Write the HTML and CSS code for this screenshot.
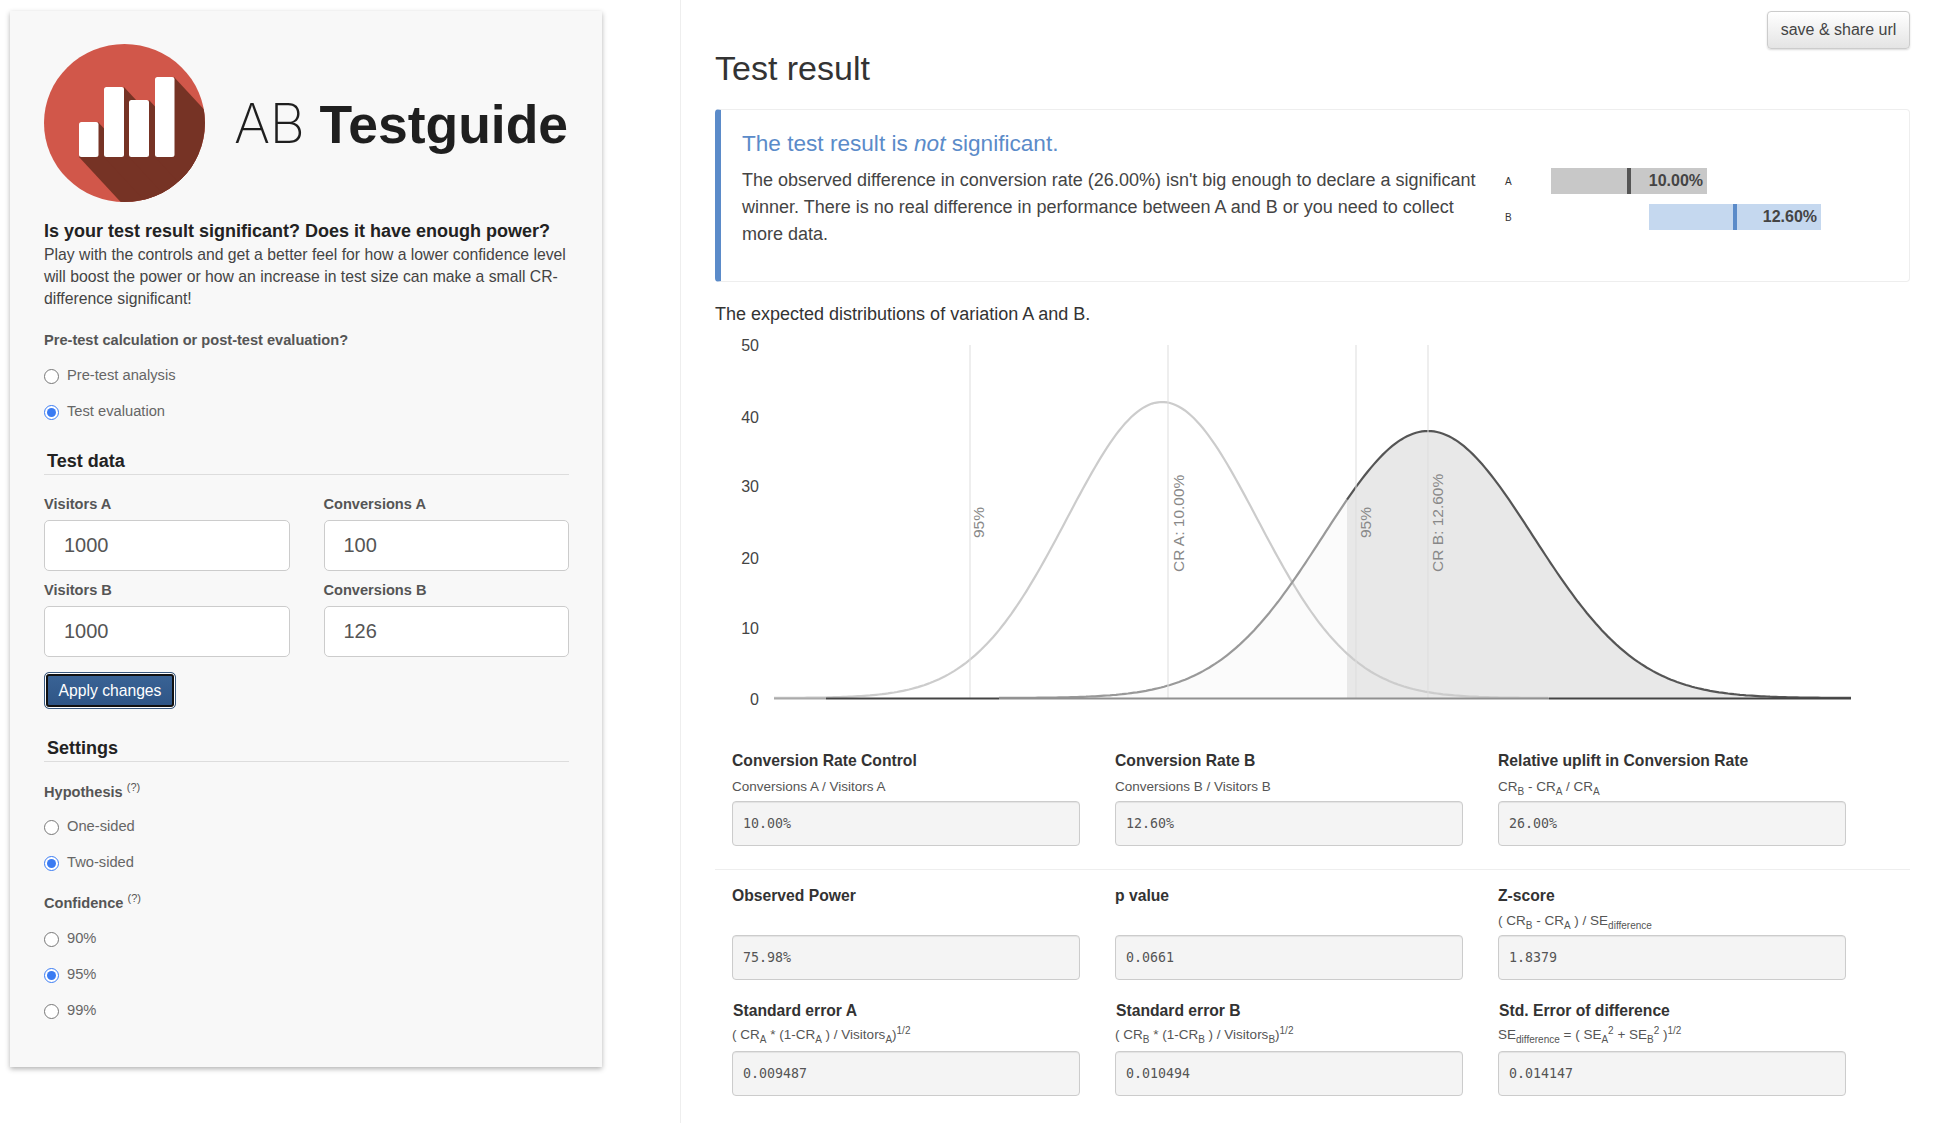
FILE: index.html
```html
<!DOCTYPE html>
<html lang="en">
<head>
    <meta charset="UTF-8">
    <meta name="viewport" content="width=device-width, initial-scale=1.0">
    <title>AB Testguide</title>
    <link rel="stylesheet" href="styles.css">
</head>
<body>
    <div class="page">
        <!-- Controls -->
        <div class="sidebar">
            <div class="card">
                <div class="logo">
                    <svg class="logo-mark" width="161" height="158" viewBox="0 0 161 158">
                        <defs>
                            <clipPath id="logo-clip"><ellipse cx="80.5" cy="79" rx="80.5" ry="79"/></clipPath>
                        </defs>
                        <ellipse cx="80.5" cy="79" rx="80.5" ry="79" fill="#d1574a"/>
                        <g clip-path="url(#logo-clip)" fill="#763325">
                            <polygon points="54,78 154,186 135,221 35,113"/>
                            <polygon points="80,43 180,151 160,221 60,113"/>
                            <polygon points="105,56 205,164 185,221 85,113"/>
                            <polygon points="130,33 230,141 211,221 111,113"/>
                        </g>
                        <g fill="#ffffff">
                            <rect x="35" y="78" width="19.5" height="35" rx="2.5"/>
                            <rect x="60" y="43" width="20" height="70" rx="2.5"/>
                            <rect x="85" y="56" width="20" height="57" rx="2.5"/>
                            <rect x="111" y="33" width="19.5" height="80" rx="2.5"/>
                        </g>
                    </svg>
                    <div class="logo-text"><span class="logo-thin">AB</span> <b>Testguide</b></div>
                </div>

                <h3 class="intro-title">Is your test result significant? Does it have enough power?</h3>
                <p class="intro-text">Play with the controls and get a better feel for how a lower confidence level will boost the power or how an increase in test size can make a small CR-difference significant!</p>

                <div class="field-label first-label">Pre-test calculation or post-test evaluation?</div>
                <div class="radio-group">
                    <label class="radio-row"><input type="radio" name="mode"> Pre-test analysis</label>
                    <label class="radio-row"><input type="radio" name="mode" checked> Test evaluation</label>
                </div>

                <h4 class="group-title">Test data</h4>
                <div class="data-grid">
                    <label class="data-field"><span class="field-label">Visitors A</span><input class="data-input" type="text" value="1000"></label>
                    <label class="data-field"><span class="field-label">Conversions A</span><input class="data-input" type="text" value="100"></label>
                    <label class="data-field"><span class="field-label">Visitors B</span><input class="data-input" type="text" value="1000"></label>
                    <label class="data-field"><span class="field-label">Conversions B</span><input class="data-input" type="text" value="126"></label>
                </div>
                <button class="apply-button">Apply changes</button>

                <h4 class="group-title settings-title">Settings</h4>
                <div class="field-label hypothesis-label">Hypothesis <sup>(?)</sup></div>
                <div class="radio-group">
                    <label class="radio-row"><input type="radio" name="sides"> One-sided</label>
                    <label class="radio-row"><input type="radio" name="sides" checked> Two-sided</label>
                </div>
                <div class="field-label confidence-label">Confidence <sup>(?)</sup></div>
                <div class="radio-group">
                    <label class="radio-row"><input type="radio" name="confidence"> 90%</label>
                    <label class="radio-row"><input type="radio" name="confidence" checked> 95%</label>
                    <label class="radio-row"><input type="radio" name="confidence"> 99%</label>
                </div>
            </div>
        </div>

        <!-- Results -->
        <div class="main">
            <div class="top-actions"><button class="share-button">save &amp; share url</button></div>
            <h1 class="page-title">Test result</h1>

            <div class="result-box">
                <h2 class="result-title">The test result is <em>not</em> significant.</h2>
                <div class="result-body">
                    <p class="result-text">The observed difference in conversion rate (26.00%) isn't big enough to declare a significant winner. There is no real difference in performance between A and B or you need to collect more data.</p>
                    <div class="mini-bars">
                        <div class="mini-row">
                            <span class="mini-label">A</span>
                            <div class="mini-bar bar-a"><i class="mini-tick"></i><span>10.00%</span></div>
                        </div>
                        <div class="mini-row">
                            <span class="mini-label">B</span>
                            <div class="mini-bar bar-b"><i class="mini-tick"></i><span>12.60%</span></div>
                        </div>
                    </div>
                </div>
            </div>

            <p class="chart-caption">The expected distributions of variation A and B.</p>

            <svg class="chart" width="1196" height="390" viewBox="714 330 1196 390">
                <path id="fill-b" fill="#fbfbfb"/>
                <path id="fill-sig" fill="#e8e8e8"/>
                <path id="line-a" class="curve" stroke="#cccccc"/>
                <path id="line-b-low" class="curve" stroke="#999999"/>
                <path id="line-b-high" class="curve" stroke="#555555"/>

                <line class="marker" x1="970" y1="345" x2="970" y2="698"/>
                <line class="marker" x1="1168" y1="345" x2="1168" y2="698"/>
                <line class="marker" x1="1356" y1="345" x2="1356" y2="698"/>
                <line class="marker" x1="1428" y1="345" x2="1428" y2="698"/>

                <line class="baseline" stroke="#aaaaaa" x1="774" y1="698.5" x2="826" y2="698.5"/>
                <line class="baseline" stroke="#444444" x1="826" y1="698.5" x2="999" y2="698.5"/>
                <line class="baseline" stroke="#909090" x1="999" y1="698.5" x2="1549" y2="698.5"/>
                <line class="baseline" stroke="#444444" x1="1549" y1="698.5" x2="1851" y2="698.5"/>

                <text class="axis-label" x="759" y="351">50</text>
                <text class="axis-label" x="759" y="423">40</text>
                <text class="axis-label" x="759" y="492">30</text>
                <text class="axis-label" x="759" y="564">20</text>
                <text class="axis-label" x="759" y="634">10</text>
                <text class="axis-label" x="759" y="705">0</text>

                <text class="marker-label" transform="translate(984 538) rotate(-90)">95%</text>
                <text class="marker-label" transform="translate(1184 572) rotate(-90)">CR A: 10.00%</text>
                <text class="marker-label" transform="translate(1371 538) rotate(-90)">95%</text>
                <text class="marker-label" transform="translate(1443 572) rotate(-90)">CR B: 12.60%</text>
            </svg>

            <div class="stat-row">
                <div class="stat">
                    <div class="stat-title">Conversion Rate Control</div>
                    <div class="stat-sub">Conversions A / Visitors A</div>
                    <output class="stat-value">10.00%</output>
                </div>
                <div class="stat">
                    <div class="stat-title">Conversion Rate B</div>
                    <div class="stat-sub">Conversions B / Visitors B</div>
                    <output class="stat-value">12.60%</output>
                </div>
                <div class="stat">
                    <div class="stat-title">Relative uplift in Conversion Rate</div>
                    <div class="stat-sub">CR<sub>B</sub> - CR<sub>A</sub> / CR<sub>A</sub></div>
                    <output class="stat-value">26.00%</output>
                </div>
            </div>

            <hr class="stat-divider">

            <div class="stat-row row-power">
                <div class="stat">
                    <div class="stat-title">Observed Power</div>
                    <div class="stat-sub"></div>
                    <output class="stat-value">75.98%</output>
                </div>
                <div class="stat">
                    <div class="stat-title">p value</div>
                    <div class="stat-sub"></div>
                    <output class="stat-value">0.0661</output>
                </div>
                <div class="stat">
                    <div class="stat-title">Z-score</div>
                    <div class="stat-sub">( CR<sub>B</sub> - CR<sub>A</sub> ) / SE<sub>difference</sub></div>
                    <output class="stat-value">1.8379</output>
                </div>
            </div>

            <div class="stat-row row-error">
                <div class="stat">
                    <div class="stat-title">Standard error A</div>
                    <div class="stat-sub">( CR<sub>A</sub> * (1-CR<sub>A</sub> ) / Visitors<sub>A</sub>)<sup>1/2</sup></div>
                    <output class="stat-value">0.009487</output>
                </div>
                <div class="stat">
                    <div class="stat-title">Standard error B</div>
                    <div class="stat-sub">( CR<sub>B</sub> * (1-CR<sub>B</sub> ) / Visitors<sub>B</sub>)<sup>1/2</sup></div>
                    <output class="stat-value">0.010494</output>
                </div>
                <div class="stat">
                    <div class="stat-title">Std. Error of difference</div>
                    <div class="stat-sub">SE<sub>difference</sub> = ( SE<sub>A</sub><sup>2</sup> + SE<sub>B</sub><sup>2</sup> )<sup>1/2</sup></div>
                    <output class="stat-value">0.014147</output>
                </div>
            </div>
        </div>
    </div>

    <script src="script.js"></script>
</body>
</html>
```

FILE: styles.css
```css
* {
    margin: 0;
    padding: 0;
    box-sizing: border-box;
}

body {
    background-color: #ffffff;
    color: #333333;
    font-family: "Liberation Sans", Arial, sans-serif;
    overflow: hidden;
}

.page {
    display: flex;
    min-height: 100vh;
}

/* Sidebar */
.sidebar {
    width: 681px;
    flex-shrink: 0;
    padding: 11px 0 0 10px;
    border-right: 1px solid #eeeeee;
}

.card {
    width: 592px;
    height: 1056px;
    padding: 33px 33px 0 34px;
    background-color: #f8f8f8;
    box-shadow: 0 2px 5px rgba(0,0,0,0.3);
}

.logo {
    display: flex;
    align-items: center;
    gap: 29px;
}

.logo-mark {
    flex-shrink: 0;
}

.logo-text {
    font-size: 53.5px;
    color: #1f1f1f;
    white-space: nowrap;
}

.logo-thin {
    font-family: Inter, "Liberation Sans", sans-serif;
    font-size: 55px;
    font-weight: 200;
    letter-spacing: -0.5px;
}

.intro-title {
    margin-top: 17px;
    font-size: 18px;
    line-height: 25px;
    color: #222222;
}

.intro-text {
    font-size: 15.75px;
    line-height: 22px;
    color: #444444;
}

.field-label {
    display: block;
    font-size: 14.6px;
    font-weight: bold;
    line-height: 20px;
    color: #555555;
}

.field-label sup {
    font-size: 11px;
    font-weight: normal;
    line-height: 0;
}

.first-label {
    margin-top: 20px;
}

.radio-group {
    margin-top: 7px;
}

.radio-row {
    display: flex;
    align-items: center;
    gap: 8px;
    height: 36px;
    font-size: 14.7px;
    color: #666666;
}

.radio-row input {
    width: 15px;
    height: 15px;
    margin: 2px 0 0;
    accent-color: #3a7bf2;
}

.group-title {
    margin-top: 19px;
    padding-left: 3px;
    height: 27px;
    font-size: 18px;
    line-height: 26px;
    color: #222222;
    border-bottom: 1px solid #dddddd;
}

.settings-title {
    margin-top: 26px;
}

.data-grid {
    display: grid;
    grid-template-columns: 1fr 1fr;
    column-gap: 34px;
    row-gap: 9px;
    margin-top: 19px;
}

.data-input {
    display: block;
    width: 100%;
    height: 51px;
    margin-top: 6px;
    padding: 0 19px;
    border: 1px solid #cccccc;
    border-radius: 5px;
    background-color: #ffffff;
    font-family: inherit;
    font-size: 20px;
    color: #555555;
}

.apply-button {
    display: block;
    width: 132px;
    height: 37px;
    margin-top: 15px;
    border: 1px solid #3a5a80;
    border-radius: 5px;
    box-shadow: inset 0 0 0 1px #ffffff, inset 0 0 0 3px #111111;
    background: linear-gradient(#3a6496, #2e5485);
    font-family: inherit;
    font-size: 15.7px;
    color: #ffffff;
}

.hypothesis-label {
    margin-top: 20px;
}

.hypothesis-label + .radio-group {
    margin-top: 6px;
}

.confidence-label {
    margin-top: 13px;
}

/* Main column */
.main {
    flex: 1;
    padding: 11px 28px 0 34px;
}

.top-actions {
    display: flex;
    justify-content: flex-end;
}

.share-button {
    width: 143px;
    height: 38px;
    border: 1px solid #cccccc;
    border-radius: 4px;
    background: linear-gradient(#ffffff, #e4e4e4);
    box-shadow: 0 1px 2px rgba(0,0,0,0.15);
    font-family: inherit;
    font-size: 16px;
    color: #444444;
}

.page-title {
    margin-top: -1px;
    font-size: 34px;
    font-weight: normal;
    line-height: 40px;
    color: #333333;
}

.result-box {
    height: 173px;
    margin-top: 21px;
    padding: 19px 20px 0 21px;
    border: 1px solid #eeeeee;
    border-left: 6px solid #5b8bc9;
    border-radius: 4px;
}

.result-title {
    font-size: 22.6px;
    font-weight: normal;
    line-height: 30px;
    color: #5b8bc9;
}

.result-body {
    display: flex;
    margin-top: 8px;
}

.result-text {
    width: 745px;
    flex-shrink: 0;
    font-size: 18px;
    line-height: 27px;
    color: #444444;
}

.mini-bars {
    display: flex;
    flex-direction: column;
    gap: 10px;
    margin: 1px 0 0 18px;
}

.mini-row {
    display: flex;
    align-items: center;
}

.mini-label {
    width: 46px;
    font-size: 10px;
    color: #333333;
}

.mini-bar {
    position: relative;
    display: flex;
    justify-content: flex-end;
    align-items: center;
    height: 26px;
    padding-right: 4px;
    font-size: 16px;
    font-weight: bold;
    color: #444444;
}

.bar-a {
    width: 156px;
    background-color: #c8c8c8;
}

.bar-b {
    width: 172px;
    margin-left: 98px;
    background-color: #c5d8ef;
}

.mini-tick {
    position: absolute;
    top: 0;
    bottom: 0;
    width: 4px;
}

.bar-a .mini-tick {
    left: 76px;
    background-color: #555555;
}

.bar-b .mini-tick {
    left: 84px;
    background-color: #5b8bc9;
}

.chart-caption {
    margin-top: 19px;
    font-size: 18px;
    line-height: 26px;
    color: #333333;
}

/* Chart */
.chart {
    display: block;
    margin: 3px 0 0 -1px;
}

.curve {
    fill: none;
    stroke-width: 2.2;
}

.marker {
    stroke: #dddddd;
    stroke-width: 1;
}

.baseline {
    stroke-width: 2;
}

.axis-label {
    font-size: 16px;
    fill: #444444;
    text-anchor: end;
}

.marker-label {
    font-size: 15.5px;
    fill: #888888;
}

/* Stats */
.stat-row {
    display: grid;
    grid-template-columns: repeat(3, 348px);
    column-gap: 35px;
    padding-left: 17px;
    margin-top: 30px;
}

.stat-title {
    font-size: 15.7px;
    font-weight: bold;
    line-height: 22px;
    color: #333333;
}

.stat-sub {
    height: 20px;
    margin-top: 5px;
    font-size: 13.5px;
    line-height: 20px;
    color: #555555;
}

.stat-sub sub, .stat-sub sup {
    font-size: 10px;
    line-height: 0;
}

.stat-value {
    display: flex;
    align-items: center;
    height: 45px;
    margin-top: 4px;
    padding-left: 10px;
    border: 1px solid #cccccc;
    border-radius: 4px;
    background-color: #f4f4f4;
    box-shadow: inset 0 1px 1px rgba(0,0,0,0.07);
    font-family: "DejaVu Sans Mono", monospace;
    font-size: 13.3px;
    color: #555555;
}

.stat-divider {
    height: 0;
    margin-top: 23px;
    border: none;
    border-top: 1px solid #eeeeee;
}

.row-power {
    margin-top: 15px;
}

.row-power .stat-sub {
    margin-top: 4px;
}

.row-error {
    margin-top: 20px;
}

.row-error .stat-title {
    margin-left: 1px;
}

.row-error .stat-sub {
    margin-top: 3px;
}

.row-error .stat-value {
    margin-top: 6px;
}
```

FILE: script.js
```js
// Normal curves of variation A and B, in chart pixels
const BASE_Y = 698;
const curveA = { center: 1162, sigma: 95, peak: 296 };
const curveB = { center: 1428, sigma: 105, peak: 267 };

function curveY(curve, x) {
    const z = (x - curve.center) / curve.sigma;
    return BASE_Y - curve.peak * Math.exp(-z * z / 2);
}

function linePath(curve, from, to) {
    let d = '';
    for (let x = from; x <= to; x += 3) {
        d += (d ? 'L' : 'M') + x + ' ' + curveY(curve, x).toFixed(1);
    }
    return d;
}

function areaPath(curve, from, to) {
    return linePath(curve, from, to) + 'L' + to + ' ' + BASE_Y + 'L' + from + ' ' + BASE_Y + 'Z';
}

document.getElementById('fill-b').setAttribute('d', areaPath(curveB, 999, 1851));
document.getElementById('fill-sig').setAttribute('d', areaPath(curveB, 1347, 1851));
document.getElementById('line-a').setAttribute('d', linePath(curveA, 774, 1549));
document.getElementById('line-b-low').setAttribute('d', linePath(curveB, 999, 1347));
document.getElementById('line-b-high').setAttribute('d', linePath(curveB, 1347, 1851));
```
